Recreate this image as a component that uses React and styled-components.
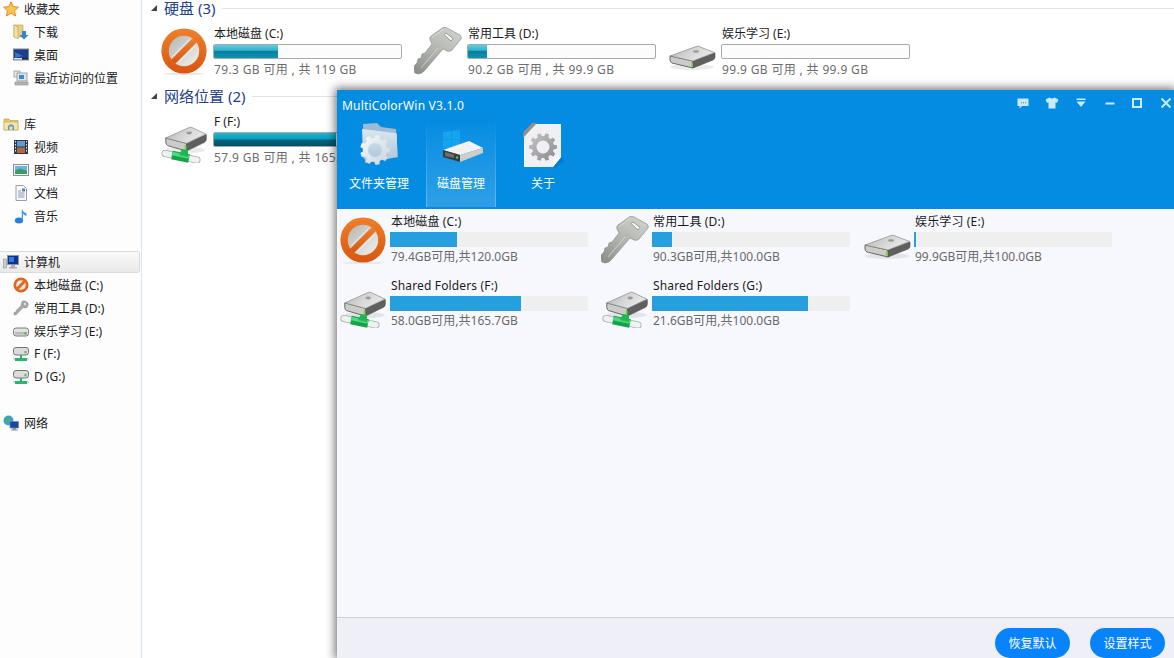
import React, { useId } from "react";
import styled, { createGlobalStyle } from "styled-components";

const Global = createGlobalStyle`
  html, body { margin: 0; padding: 0; background: #fff; }
  body { font-family: "Noto Sans", "Noto Sans CJK SC", sans-serif; font-size: 12px; color: #1b1b1b; }
  * { box-sizing: border-box; }
`;

const Page = styled.div`
  position: relative;
  width: 1174px;
  height: 658px;
  overflow: hidden;
  display: grid;
  grid-template-columns: 142px 1fr;
  background: #fff;
`;
const Sidebar = styled.nav`
  border-right: 1px solid #d9e5f2;
  background: #fdfdfe;
  overflow: hidden;
`;
const NavList = styled.div`
  margin-top: -3px;
`;
const NavGroup = styled.div`
  display: flow-root;
  margin-bottom: 23px;
`;
const NavRow = styled.div`
  height: 23px;
  display: flex;
  align-items: center;
  gap: 5px;
  padding-left: ${(p) => (p.$child ? "13px" : "3px")};
  white-space: nowrap;
  color: #1a1a1a;
  ${(p) =>
    p.$selected &&
    `
    background: linear-gradient(#fafafa, #e9e9e9);
    border: 1px solid #dcdcdc;
    border-left: 0;
    border-radius: 0 3px 3px 0;
    margin-right: 1px;
    height: 22px;
    margin-top: 1px;
  `}
`;
const Main = styled.main`
  padding-left: 9px;
  overflow: hidden;
`;
const Section = styled.section`
  margin-bottom: 10px;
`;
const SectionHead = styled.h2`
  margin: 0 0 8px;
  height: 16px;
  display: flex;
  align-items: center;
  gap: 7px;
  font-size: 15px;
  font-weight: 400;
  color: #24408f;
  white-space: nowrap;
  &::after {
    content: "";
    flex: 1;
    height: 1px;
    background: #e3e3e3;
  }
`;
const SectionLabel = styled.span`
  line-height: 16px;
`;
const Caret = styled.span`
  width: 0;
  height: 0;
  border-style: solid;
  border-width: 0 0 6px 6px;
  border-color: transparent transparent #444 transparent;
`;
const DriveRow = styled.div`
  display: flex;
  padding-left: 9px;
`;
const DriveTile = styled.div`
  flex: 0 0 254px;
  display: flex;
  align-items: center;
  gap: 5px;
  height: 54px;
`;
const DriveText = styled.div`
  width: 189px;
`;
const DriveName = styled.div`
  height: 18px;
  line-height: 20px;
  padding-left: 1px;
  white-space: nowrap;
`;
const DriveSub = styled.div`
  height: 18px;
  line-height: 20px;
  padding-left: 1px;
  color: #6d6d6d;
  white-space: nowrap;
  letter-spacing: 0.35px;
`;
const ExplorerBar = styled.div`
  height: 15px;
  margin: 2px 0 1px;
  border: 1px solid #a9a9a9;
  border-radius: 2px;
  background: #fcfcfc;
  overflow: hidden;
`;
const ExplorerFill = styled.div`
  height: 100%;
  background: linear-gradient(#5fcde2 0%, #35b3cf 40%, #0b7f9f 50%, #0f93b4 100%);
  ${(p) => p.$deep && `background: linear-gradient(#22b6d2 0%, #0a9dbd 45%, #05657f 55%, #064e66 100%);`}
`;
const Window = styled.div`
  position: absolute;
  left: 337px;
  top: 90px;
  right: 0;
  bottom: 0;
  display: flex;
  flex-direction: column;
  background: #f7f8fd;
  box-shadow: 0 0 9px 2px rgba(0, 0, 0, 0.55);
`;
const Header = styled.header`
  height: 119px;
  background: #048ce2;
  color: #fff;
`;
const TitleBar = styled.div`
  height: 30px;
  display: flex;
  align-items: center;
  justify-content: space-between;
  padding: 0 1px 0 5px;
`;
const Title = styled.div`
  font-size: 12px;
  letter-spacing: 0.2px;
`;
const Controls = styled.div`
  display: flex;
  align-items: center;
`;
const ControlIcon = styled.svg`
  width: 14px;
  height: 14px;
  margin-left: ${(p) => (p.$tight ? "13px" : "15px")};
  display: block;
  margin-top: -5px;
`;
const Tabs = styled.div`
  display: flex;
  gap: 12px;
  padding-left: 7px;
`;
const Tab = styled.div`
  width: 70px;
  height: 87px;
  display: flex;
  flex-direction: column;
  align-items: center;
  color: #fff;
  white-space: nowrap;
  ${(p) =>
    p.$active &&
    `
    background: linear-gradient(rgba(255,255,255,0), rgba(255,255,255,.05) 25%, rgba(255,255,255,.17));
    border-left: 1px solid;
    border-right: 1px solid;
    border-image: linear-gradient(rgba(255,255,255,0), rgba(255,255,255,.28)) 1;
  `}
`;
const TabIcon = styled.div`
  height: 48px;
  display: flex;
  align-items: center;
  justify-content: center;
`;
const TabLabel = styled.div`
  margin-top: 7px;
  line-height: 18px;
`;
const Body = styled.div`
  flex: 1;
  padding: 5px 0 0 2px;
  display: grid;
  grid-template-columns: repeat(3, 262px);
  grid-auto-rows: 51px;
  row-gap: 13px;
`;
const WinTile = styled.div`
  display: flex;
  align-items: center;
  gap: 3px;
`;
const WinText = styled.div`
  width: 198px;
`;
const WinName = styled.div`
  height: 18px;
  line-height: 16px;
  padding-left: 1px;
  white-space: nowrap;
  letter-spacing: 0.15px;
`;
const WinSub = styled.div`
  height: 18px;
  line-height: 20px;
  padding-left: 1px;
  color: #6a6a6a;
  white-space: nowrap;
`;
const WinBar = styled.div`
  height: 15px;
  background: #efefef;
`;
const WinFill = styled.div`
  height: 100%;
  background: #259fdd;
`;
const Footer = styled.footer`
  height: 41px;
  flex: none;
  border-top: 1px solid #d0d0d3;
  background: #eeeff7;
  display: flex;
  justify-content: flex-end;
  gap: 20px;
  padding: 10px 9px 0 0;
`;
const PillButton = styled.button`
  width: 75px;
  height: 30px;
  border: 0;
  border-radius: 15px;
  background: #0784fb;
  color: #fff;
  font: inherit;
  padding: 0;
`;

const gear = (cx, cy, r, R, n) => {
  let d = "";
  for (let i = 0; i < n; i++) {
    const a = (i / n) * Math.PI * 2;
    const s = (Math.PI * 2) / n;
    const pts = [
      [r, a - s * 0.32],
      [R, a - s * 0.2],
      [R, a + s * 0.2],
      [r, a + s * 0.32],
    ];
    pts.forEach(([rad, t], j) => {
      d += `${i === 0 && j === 0 ? "M" : "L"}${(cx + rad * Math.cos(t)).toFixed(2)} ${(cy + rad * Math.sin(t)).toFixed(2)}`;
    });
  }
  return d + "Z";
};

const Stop = ({ size = 48 }) => {
  const id = useId();
  return (
    <svg width={size} height={size} viewBox="0 0 48 48">
      <defs>
        <linearGradient id={id} x1="0" y1="0" x2="0" y2="1">
          <stop offset="0" stopColor="#ee7f2a" />
          <stop offset="1" stopColor="#d9560f" />
        </linearGradient>
        <linearGradient id={id + "b"} x1="0" y1="0" x2="1" y2="1">
          <stop offset="0" stopColor="#b4b4b0" />
          <stop offset="1" stopColor="#f3f2ee" />
        </linearGradient>
      </defs>
      <ellipse cx="24" cy="46.8" rx="21" ry="1.2" fill="#e8e8e8" />
      <circle cx="24" cy="24" r="22.6" fill={`url(#${id})`} />
      <circle cx="24" cy="24" r="15.2" fill={`url(#${id}b)`} />
      <path d="M11 33 L33 11 L37 15 L15 37 Z" fill={`url(#${id})`} />
      <path d="M12.4 29.6 L29.6 12.4 M18.4 35.6 L35.6 18.4" stroke="#fff" strokeOpacity="0.85" strokeWidth="0.9" />
    </svg>
  );
};

const Key = ({ size = 48 }) => {
  const id = useId();
  return (
    <svg width={size} height={size} viewBox="0 0 48 48">
      <defs>
        <linearGradient id={id} x1="0.8" y1="0" x2="0.1" y2="1">
          <stop offset="0" stopColor="#cfd1cc" />
          <stop offset="0.55" stopColor="#aeb1ac" />
          <stop offset="1" stopColor="#8c908b" />
        </linearGradient>
      </defs>
      <path
        d="M29 .5 Q31 0 33 1 L46 8 Q48 10 47 12 L38 23 Q36 25 33 24 L29 22 L11 43 Q8 47 4 47 Q0 47 0 43 L0 39 L3 36 L4 32 L7 31 L8 27 L11 26 L18 17 L16 13 Q15 11 17 9 Z"
        fill={`url(#${id})`}
        stroke="#8d908b"
        strokeWidth="0.7"
      />
      <path d="M30 7.5 L32 6 L39 11.5 L37 14 Z" fill="#fafafa" stroke="#82857f" strokeWidth="0.8" />
      <path d="M18 11 L29 2.5 M24 21 L7 41" stroke="#dfe0dd" strokeOpacity="0.7" strokeWidth="1" />
    </svg>
  );
};

const HddShape = ({ id }) => (
  <>
    <defs>
      <linearGradient id={id} x1="0" y1="0" x2="1" y2="0.4">
        <stop offset="0" stopColor="#b4b4b4" />
        <stop offset="0.6" stopColor="#d8d8d8" />
        <stop offset="1" stopColor="#e8e8e8" />
      </linearGradient>
    </defs>
    <ellipse cx="24" cy="40" rx="22" ry="3" fill="#000" opacity="0.08" />
    <path d="M2 29 L25 34 L25 41 L4 36 Q2 35 2 33 Z" fill="#cbcbc9" stroke="#5c5c5a" strokeWidth="0.9" />
    <path d="M25 34 L47 26 L47 30 Q47 32 45 33 L25 41 Z" fill="#5f5f5d" stroke="#4a4a48" strokeWidth="0.6" />
    <path d="M2 29 L28 19.5 Q29.5 19 31 19.5 L46.5 25.5 L25 34 Z" fill={`url(#${id})`} stroke="#7b7b7b" strokeWidth="0.6" />
    <path d="M23 35.5 L25 36 L25 40 L23 39.5 Z" fill="#7ed13f" />
    <ellipse cx="28" cy="24.5" rx="3" ry="1.3" fill="#9a9a9a" />
  </>
);

const Hdd = ({ size = 48 }) => {
  const id = useId();
  return (
    <svg width={size} height={size} viewBox="0 0 48 48">
      <HddShape id={id} />
    </svg>
  );
};

const NetHdd = ({ size = 48 }) => {
  const id = useId();
  return (
    <svg width={size} height={size} viewBox="0 0 48 48">
      <g transform="translate(4 -9) scale(0.9 1.1)">
        <HddShape id={id} />
      </g>
      <path d="M5 38.5 L37 45" stroke="#a4aeaa" strokeWidth="7" strokeLinecap="round" />
      <path d="M5 38.5 L37 45" stroke="#eef3f0" strokeWidth="5.4" strokeLinecap="round" />
      <path d="M12 40 L29 43.5" stroke="#14a349" strokeWidth="8.5" />
      <path d="M12 38.5 L29 42" stroke="#4fd97e" strokeWidth="3.5" />
      <path d="M19 40 L22 34 L28 35 L28 42 Z" fill="#1fb755" />
    </svg>
  );
};

const FolderGear = () => {
  const id = useId();
  return (
    <svg width="40" height="46" viewBox="0 0 40 46">
      <defs>
        <linearGradient id={id} x1="0" y1="0" x2="0" y2="1">
          <stop offset="0" stopColor="#dbe7f1" />
          <stop offset="1" stopColor="#a9c5db" />
        </linearGradient>
        <linearGradient id={id + "g"} x1="0" y1="0" x2="1" y2="1">
          <stop offset="0" stopColor="#fafbfb" />
          <stop offset="1" stopColor="#c8d3db" />
        </linearGradient>
      </defs>
      <path d="M4 3 L18 2 L22 6 L37 8 L39 36 L6 42 Z" fill="#9fbcd6" />
      <path d="M3 8 L36 12 Q38 12 38 14 L38 36 L8 41 L4 36 Z" fill={`url(#${id})`} />
      <path fillRule="evenodd" d={gear(16, 29, 12, 15, 9) + " M23 29 A7 7 0 1 0 9 29 A7 7 0 1 0 23 29 Z"} fill={`url(#${id}g)`} />
    </svg>
  );
};

const WinDrive = () => (
  <svg width="44" height="40" viewBox="0 0 44 40">
    <path d="M4 8 L12 7 L12 15.5 L4 15.5 Z M12.6 7 L21 6 L21 15.5 L12.6 15.5 Z M4 16 L12 16 L12 24 L4 24 Z M12.6 16 L21 16 L21 24 L12.6 24 Z" fill="#14a4f0" />
    <path d="M4 26 L30 17 L44 24 L21 31 Z" fill="#f2f2f2" />
    <path d="M4 26 L21 31 L21 38 L4 33 Z" fill="#3b3b3b" />
    <path d="M21 31 L44 24 L44 29 L21 38 Z" fill="#cdcdcd" />
    <circle cx="18" cy="33.5" r="1.2" fill="#35d05a" />
    <path d="M6 28 L15 30.5 L15 34 L6 32 Z" fill="#6e6e6e" />
  </svg>
);

const FileGear = () => {
  const id = useId();
  return (
    <svg width="42" height="46" viewBox="0 -2 42 46">
      <defs>
        <linearGradient id={id} x1="0" y1="0" x2="1" y2="1">
          <stop offset="0" stopColor="#c6c6c6" />
          <stop offset="1" stopColor="#8a8a8a" />
        </linearGradient>
      </defs>
      <path d="M10 1 L39 1 L39 34 L31 44 L2 44 L2 9 Z" fill="#f0f0f4" />
      <path d="M39 34 L31 44 L31 36 Z" fill="#fff" />
      <path d="M31 44 L41 34 L42 38 L33 45 Z" fill="#0a6cb0" opacity="0.5" />
      <path d="M1 15 L1 10 L10 0 L15 0 Z" fill="#8f8f8f" />
      <path fillRule="evenodd" d={gear(21, 24, 11, 14, 10) + " M27.5 24 A6.5 6.5 0 1 0 14.5 24 A6.5 6.5 0 1 0 27.5 24 Z"} fill={`url(#${id})`} />
    </svg>
  );
};

const Star = () => (
  <svg width="16" height="16" viewBox="0 0 16 16">
    <path d="M8 .8 L10.2 5.6 L15.4 6.2 L11.5 9.7 L12.6 15 L8 12.3 L3.4 15 L4.5 9.7 L.6 6.2 L5.8 5.6 Z" fill="#fbc64b" stroke="#e8882a" />
  </svg>
);
const DownloadFolder = () => (
  <svg width="16" height="16" viewBox="0 0 16 16">
    <path d="M1 1 H10 V13 H1 Z" fill="#e9cf7f" stroke="#b59a4b" strokeWidth=".6" />
    <path d="M1 1 L5 3 V15 L1 13 Z" fill="#f4e3a6" stroke="#b59a4b" strokeWidth=".6" />
    <path d="M9 7 H13 V11 H15.5 L11 15.5 L6.5 11 H9 Z" fill="#2d86d6" />
  </svg>
);
const Desktop = () => (
  <svg width="16" height="16" viewBox="0 0 16 16">
    <rect x="0.5" y="2" width="15" height="11" fill="#1d3f8b" stroke="#7a8694" />
    <path d="M2 5 L10 9 L2 11 Z" fill="#3b6fc2" />
    <rect x="1" y="11" width="14" height="1.6" fill="#d8dde3" />
    <rect x="9" y="11" width="6" height="1.6" fill="#222" />
  </svg>
);
const Recent = () => (
  <svg width="16" height="16" viewBox="0 0 16 16">
    <rect x="1" y="1" width="6" height="6" fill="#e8e8e8" stroke="#8a8a8a" strokeWidth=".7" />
    <rect x="4" y="3" width="10" height="8" fill="#d7e6f2" stroke="#858585" strokeWidth=".7" />
    <rect x="6" y="5" width="5" height="4" fill="#3a8fcb" />
    <rect x="2" y="12" width="13" height="3" fill="#b5b5b5" stroke="#7f7f7f" strokeWidth=".5" />
  </svg>
);
const Library = () => (
  <svg width="16" height="16" viewBox="0 0 16 16">
    <path d="M1 3 H6 L7 4.5 H15 V14 H1 Z" fill="#e8c86e" stroke="#b79b49" strokeWidth=".6" />
    <path d="M1 6 H15 V14 H1 Z" fill="#f5e3a3" stroke="#b79b49" strokeWidth=".5" />
    <path d="M5 14 V10 Q8 6.5 11 10 V14 H9.5 V10.5 H6.5 V14 Z" fill="#4f9fd8" />
  </svg>
);
const Video = () => (
  <svg width="16" height="16" viewBox="0 0 16 16">
    <rect x="1" y="1" width="14" height="14" fill="#2b3a46" />
    <rect x="4" y="2" width="8" height="5.5" fill="#5d9bd1" />
    <rect x="4" y="8.5" width="8" height="5.5" fill="#b06a3f" />
    <path d="M2 2 h1 v1.5 h-1Z M2 5 h1 v1.5 h-1Z M2 8 h1 v1.5 h-1Z M2 11 h1 v1.5 h-1Z M13 2 h1 v1.5 h-1Z M13 5 h1 v1.5 h-1Z M13 8 h1 v1.5 h-1Z M13 11 h1 v1.5 h-1Z" fill="#e7e7e7" />
  </svg>
);
const Picture = () => (
  <svg width="16" height="16" viewBox="0 0 16 16">
    <rect x=".5" y="2.5" width="15" height="11" fill="#f4f4f4" stroke="#8b8f94" />
    <rect x="2" y="4" width="12" height="4.5" fill="#6fb5e4" />
    <path d="M2 8.5 L7 6.5 L14 8.5 V12 H2 Z" fill="#3f9a6a" />
  </svg>
);
const Doc = () => (
  <svg width="16" height="16" viewBox="0 0 16 16">
    <path d="M3 .5 H10.5 L13.5 3.5 V15.5 H3 Z" fill="#fbfbfb" stroke="#9a9ea6" />
    <path d="M5 6 H8 M5 8 H11.5 M5 10 H11.5 M5 12 H11.5" stroke="#8297b5" />
    <rect x="9" y="3.5" width="3" height="3" fill="#5a80b5" />
  </svg>
);
const Music = () => (
  <svg width="16" height="16" viewBox="0 0 16 16">
    <ellipse cx="6" cy="12.5" rx="4.2" ry="3" fill="#2f7fd8" />
    <path d="M8.8 12 L8.8 1 Q10 4 13.5 5.5 L13.5 8 Q11 7 10 5.5 L10 12 Z" fill="#3c97e6" />
  </svg>
);
const Computer = () => (
  <svg width="16" height="16" viewBox="0 0 16 16">
    <rect x="0.5" y="5" width="3" height="9" fill="#c9cfca" stroke="#7d8680" strokeWidth=".5" />
    <rect x="4.5" y="1.5" width="11" height="9" fill="#12318f" stroke="#8d95a0" />
    <rect x="6" y="3" width="5" height="5" fill="#2e7fe0" />
    <path d="M8 11 H12 V13 H14 V14.5 H6 V13 H8 Z" fill="#a8adb3" />
  </svg>
);
const MiniStop = () => (
  <svg width="16" height="16" viewBox="0 0 16 16">
    <circle cx="8" cy="8" r="7.5" fill="#df661c" />
    <circle cx="8" cy="8" r="4.8" fill="#e9e6e0" />
    <path d="M3.5 10.5 L10.5 3.5 L12.5 5.5 L5.5 12.5 Z" fill="#df661c" />
  </svg>
);
const MiniKey = () => (
  <svg width="16" height="16" viewBox="0 0 16 16">
    <path d="M9.5 1 Q12 0 15 3 Q16 5.5 14 7.5 Q12.5 8.5 10 7.5 L3.5 14.5 L1 15 L1 12.5 L3 12 L3.5 10 L8 6 Q8 3 9.5 1 Z" fill="#a8aaa6" stroke="#7e807c" strokeWidth=".5" />
    <circle cx="12" cy="4" r="1" fill="#efefef" />
  </svg>
);
const MiniHdd = () => (
  <svg width="16" height="16" viewBox="0 0 16 16">
    <rect x="0.5" y="5" width="15" height="8" rx="2.5" fill="#e2e2e2" stroke="#7b7b7b" />
    <rect x="2" y="9" width="12" height="2.6" fill="#b9b9b9" />
    <rect x="11.5" y="9" width="2" height="2.4" fill="#4ebb39" />
  </svg>
);
const MiniNet = () => (
  <svg width="16" height="16" viewBox="0 0 16 16">
    <rect x="0.5" y="1.5" width="15" height="7.5" rx="2.5" fill="#dcdcdc" stroke="#737373" />
    <rect x="11.5" y="5" width="2" height="2.2" fill="#4ebb39" />
    <path d="M7 9 H9 V12 H14 V15 H2 V12 H7 Z" fill="#1fbd6a" />
    <path d="M0 13 H2 M14 13 H16" stroke="#b7b7b7" />
  </svg>
);
const Globe = () => (
  <svg width="16" height="16" viewBox="0 0 16 16">
    <circle cx="5.5" cy="5.5" r="5" fill="#39a0dc" />
    <path d="M2 3 Q5 1 7 3 L5.5 6 L3 6 Z M7 7 L10 6 L9 10 L6.5 9.5 Z" fill="#4cb54a" />
    <rect x="7" y="6.5" width="8.5" height="6.5" fill="#17479f" stroke="#7b8894" strokeWidth=".7" />
    <path d="M9.5 13 H13 V14.5 H15 V15.5 H8 V14.5 H9.5 Z" fill="#8d949b" />
  </svg>
);

const ctl = "#cdeafc";
const ChatIcon = () => (
  <ControlIcon viewBox="0 0 14 14">
    <path d="M1.5 2.5 H12.5 V10 H6 L3.5 12.5 V10 H1.5 Z" fill={ctl} />
    <path d="M5 6.2 h1 v1 h-1Z M7 6.2 h1 v1 h-1Z M9 6.2 h1 v1 h-1Z" fill="#048ce2" />
  </ControlIcon>
);
const ShirtIcon = () => (
  <ControlIcon viewBox="0 0 14 14">
    <path d="M4.5 1.5 Q7 3.5 9.5 1.5 L13.5 3.5 L12 7 L10.5 6.2 V12.5 H3.5 V6.2 L2 7 L.5 3.5 Z" fill={ctl} />
  </ControlIcon>
);
const DropIcon = () => (
  <ControlIcon viewBox="0 0 14 14">
    <path d="M2.5 2.5 H11.5 V4 H2.5 Z M2.5 5.5 H11.5 L7 11 Z" fill={ctl} />
  </ControlIcon>
);
const MinIcon = () => (
  <ControlIcon viewBox="0 0 14 14">
    <rect x="2.5" y="6.5" width="9" height="2" fill={ctl} />
  </ControlIcon>
);
const MaxIcon = () => (
  <ControlIcon $tight viewBox="0 0 14 14">
    <rect x="3" y="3" width="8" height="8" fill="none" stroke={ctl} strokeWidth="2" />
  </ControlIcon>
);
const CloseIcon = () => (
  <ControlIcon viewBox="0 0 14 14">
    <path d="M2.5 2.5 L11.5 11.5 M11.5 2.5 L2.5 11.5" stroke={ctl} strokeWidth="1.9" />
  </ControlIcon>
);

const nav = [
  [
    { icon: <Star />, label: "收藏夹" },
    { icon: <DownloadFolder />, label: "下载", child: true },
    { icon: <Desktop />, label: "桌面", child: true },
    { icon: <Recent />, label: "最近访问的位置", child: true },
  ],
  [
    { icon: <Library />, label: "库" },
    { icon: <Video />, label: "视频", child: true },
    { icon: <Picture />, label: "图片", child: true },
    { icon: <Doc />, label: "文档", child: true },
    { icon: <Music />, label: "音乐", child: true },
  ],
  [
    { icon: <Computer />, label: "计算机", selected: true },
    { icon: <MiniStop />, label: "本地磁盘 (C:)", child: true },
    { icon: <MiniKey />, label: "常用工具 (D:)", child: true },
    { icon: <MiniHdd />, label: "娱乐学习 (E:)", child: true },
    { icon: <MiniNet />, label: "F (F:)", child: true },
    { icon: <MiniNet />, label: "D (G:)", child: true },
  ],
  [{ icon: <Globe />, label: "网络" }],
];

const hardDrives = [
  { Icon: Stop, name: "本地磁盘 (C:)", sub: "79.3 GB 可用 , 共 119 GB", pct: 34 },
  { Icon: Key, name: "常用工具 (D:)", sub: "90.2 GB 可用 , 共 99.9 GB", pct: 10 },
  { Icon: Hdd, name: "娱乐学习 (E:)", sub: "99.9 GB 可用 , 共 99.9 GB", pct: 0 },
];
const netDrives = [{ Icon: NetHdd, name: "F (F:)", sub: "57.9 GB 可用 , 共 165.7 GB", pct: 65, deep: true }];

const winDrives = [
  { Icon: Stop, name: "本地磁盘 (C:)", sub: "79.4GB可用,共120.0GB", width: 67 },
  { Icon: Key, name: "常用工具 (D:)", sub: "90.3GB可用,共100.0GB", width: 20 },
  { Icon: Hdd, name: "娱乐学习 (E:)", sub: "99.9GB可用,共100.0GB", width: 2 },
  { Icon: NetHdd, name: "Shared Folders (F:)", sub: "58.0GB可用,共165.7GB", width: 131 },
  { Icon: NetHdd, name: "Shared Folders (G:)", sub: "21.6GB可用,共100.0GB", width: 156 },
];

const ExplorerDrive = ({ d }) => (
  <DriveTile>
    <d.Icon />
    <DriveText>
      <DriveName>{d.name}</DriveName>
      <ExplorerBar>
        <ExplorerFill $deep={d.deep} style={{ width: `${d.pct}%` }} />
      </ExplorerBar>
      <DriveSub>{d.sub}</DriveSub>
    </DriveText>
  </DriveTile>
);

export default function App() {
  return (
    <>
      <Global />
      <Page>
        <Sidebar>
          <NavList>
            {nav.map((group, i) => (
              <NavGroup key={i}>
                {group.map((r) => (
                  <NavRow key={r.label} $child={r.child} $selected={r.selected}>
                    {r.icon}
                    <span>{r.label}</span>
                  </NavRow>
                ))}
              </NavGroup>
            ))}
          </NavList>
        </Sidebar>
        <Main>
          <Section>
            <SectionHead>
              <Caret />
              <SectionLabel>硬盘 (3)</SectionLabel>
            </SectionHead>
            <DriveRow>
              {hardDrives.map((d) => (
                <ExplorerDrive key={d.name} d={d} />
              ))}
            </DriveRow>
          </Section>
          <Section>
            <SectionHead>
              <Caret />
              <SectionLabel>网络位置 (2)</SectionLabel>
            </SectionHead>
            <DriveRow>
              {netDrives.map((d) => (
                <ExplorerDrive key={d.name} d={d} />
              ))}
            </DriveRow>
          </Section>
        </Main>
        <Window>
          <Header>
            <TitleBar>
              <Title>MultiColorWin V3.1.0</Title>
              <Controls>
                <ChatIcon />
                <ShirtIcon />
                <DropIcon />
                <MinIcon />
                <MaxIcon />
                <CloseIcon />
              </Controls>
            </TitleBar>
            <Tabs>
              <Tab>
                <TabIcon>
                  <FolderGear />
                </TabIcon>
                <TabLabel>文件夹管理</TabLabel>
              </Tab>
              <Tab $active>
                <TabIcon>
                  <WinDrive />
                </TabIcon>
                <TabLabel>磁盘管理</TabLabel>
              </Tab>
              <Tab>
                <TabIcon>
                  <FileGear />
                </TabIcon>
                <TabLabel>关于</TabLabel>
              </Tab>
            </Tabs>
          </Header>
          <Body>
            {winDrives.map((d) => (
              <WinTile key={d.name}>
                <d.Icon />
                <WinText>
                  <WinName>{d.name}</WinName>
                  <WinBar>
                    <WinFill style={{ width: d.width }} />
                  </WinBar>
                  <WinSub>{d.sub}</WinSub>
                </WinText>
              </WinTile>
            ))}
          </Body>
          <Footer>
            <PillButton>恢复默认</PillButton>
            <PillButton>设置样式</PillButton>
          </Footer>
        </Window>
      </Page>
    </>
  );
}
